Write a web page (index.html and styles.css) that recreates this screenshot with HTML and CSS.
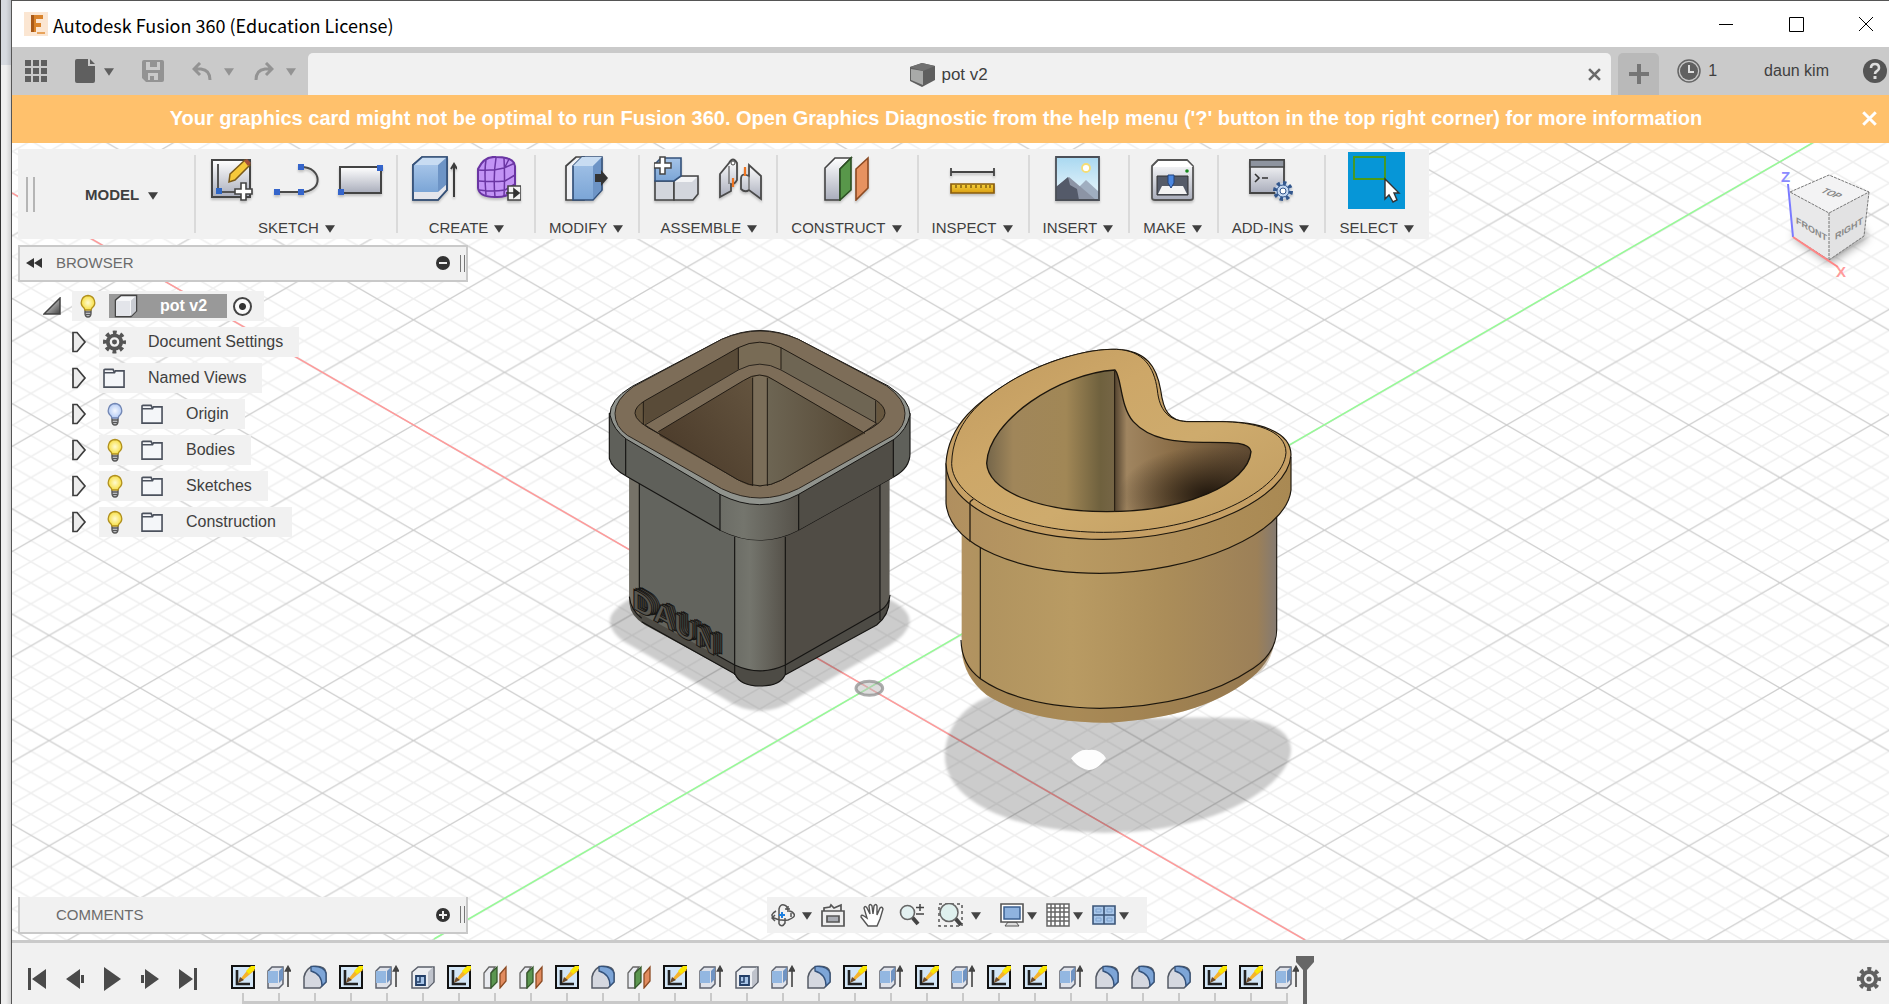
FILE: index.html
```html
<!DOCTYPE html>
<html lang="en">
<head>
<meta charset="utf-8">
<title>Autodesk Fusion 360 (Education License)</title>
<link rel="stylesheet" href="styles.css">
</head>
<body>
<svg class="defs" width="0" height="0" aria-hidden="true">
  <defs>
    <linearGradient id="steel" x1="0" y1="0" x2="0" y2="1"><stop offset="0" stop-color="#fff"/><stop offset="1" stop-color="#a9adbb"/></linearGradient>
    <linearGradient id="blue" x1="0" y1="0" x2="0" y2="1"><stop offset="0" stop-color="#a5c4e8"/><stop offset="1" stop-color="#7ba5d6"/></linearGradient>
    <linearGradient id="sky" x1="0" y1="0" x2="0" y2="1"><stop offset="0" stop-color="#a9d8f0"/><stop offset="1" stop-color="#eef8fd"/></linearGradient>
    <linearGradient id="gold" x1="0" y1="0" x2="0" y2="1"><stop offset="0" stop-color="#f8d33c"/><stop offset="1" stop-color="#d99e14"/></linearGradient>
    <radialGradient id="lit"><stop offset="0" stop-color="#fffbd0"/><stop offset="1" stop-color="#f7df45"/></radialGradient>
    <radialGradient id="unlit"><stop offset="0" stop-color="#f4f8ff"/><stop offset="1" stop-color="#b7cdf5"/></radialGradient>
    <linearGradient id="tri" x1="0" y1="0" x2="1" y2="1"><stop offset="0" stop-color="#fff"/><stop offset="1" stop-color="#444"/></linearGradient>

    <symbol id="caret" viewBox="0 0 12 10"><path d="M0 1h12L6 10z" fill="currentColor"/></symbol>
    <symbol id="cross" viewBox="0 0 12 12"><path d="M1 1l10 10M11 1L1 11" stroke="currentColor" stroke-width="2.4" fill="none"/></symbol>
    <symbol id="gear" viewBox="0 0 24 24">
      <circle cx="12" cy="12" r="10" fill="none" stroke="currentColor" stroke-width="4" stroke-dasharray="4 3.85" stroke-dashoffset="2"/>
      <circle cx="12" cy="12" r="7" fill="none" stroke="currentColor" stroke-width="4"/>
      <circle cx="12" cy="12" r="2.6" fill="currentColor"/>
    </symbol>
    <symbol id="bulb-parts" viewBox="0 0 18 24">
      <path d="M6 14h6v5q0 4-3 4t-3-4z" fill="#dcdfe4" stroke="#555" stroke-width="1.4"/><path d="M6 18h6M6.500 20.500h5" stroke="#555" stroke-width="1.300"/>
    </symbol>
    <symbol id="bulb-on" viewBox="0 0 18 24"><use href="#bulb-parts"/><path d="M9 1.500a7 7 0 0 1 4 12.500l-1 2H6l-1-2A7 7 0 0 1 9 1.500z" fill="url(#lit)" stroke="#b1901d" stroke-width="1.300"/></symbol>
    <symbol id="bulb-off" viewBox="0 0 18 24"><use href="#bulb-parts"/><path d="M9 1.500a7 7 0 0 1 4 12.500l-1 2H6l-1-2A7 7 0 0 1 9 1.500z" fill="url(#unlit)" stroke="#7186b4" stroke-width="1.300"/></symbol>
    <symbol id="folder" viewBox="0 0 24 22"><path d="M1 5V2.500Q1 1.500 2 1.500h8.500L12 5M1 5h11L13 3h9v17H1z" fill="#f4f6f9" stroke="#4b515d" stroke-width="1.700"/></symbol>
    <symbol id="expand" viewBox="0 0 16 22"><path d="M2 1.500h4L14 11 6 20.500H2z" fill="#ececec" stroke="#3d3d3d" stroke-width="1.700"/></symbol>
    <symbol id="component" viewBox="0 0 24 24"><path d="M1.500 6L7 1.500h15.500V17L17 22.500H1.500z" fill="#f6f7f9" stroke="#444" stroke-width="1.500"/><path d="M17 22V6.500L22 2v15z" fill="#c9ccd2"/><path d="M2 7h14v15H2z" fill="#e3e5ea"/></symbol>

    <symbol id="sketch" viewBox="0 0 45 45">
      <path d="M2 4h38v37H2z" fill="url(#steel)" stroke="#444" stroke-width="2"/><path d="M8 8v29M12 36h22" stroke="#555" stroke-width="2"/>
      <path d="M6 32h6v6H6z" fill="#2f66c4"/><path d="M20 18L35 4l5 5-15 15-6 2z" fill="#f6c93a" stroke="#7a5a1b" stroke-width="1.500"/><path d="M34 5l3-2 4 4-3 3z" fill="#a4513a"/>
      <path d="M31 27h5v6h6v5h-6v6h-5v-6h-6v-5h6z" fill="#fff" stroke="#444" stroke-width="1.600"/>
    </symbol>
    <symbol id="arc" viewBox="0 0 45 45"><path d="M3 36h25M27 11c22 0 22 25 1 25" fill="none" stroke="#4a4a4a" stroke-width="2"/><path d="M0 33h6v6H0zM24 33h6v6h-6zM24 8h6v6h-6z" fill="#3565cb"/></symbol>
    <symbol id="rect" viewBox="0 0 45 45"><path d="M2 11h41v26H2z" fill="url(#steel)" stroke="#444" stroke-width="2"/><path d="M0 33h6v6H0zM39 9h6v6h-6z" fill="#3565cb"/></symbol>
    <symbol id="extrude" viewBox="0 0 45 45">
      <path d="M1 36V9l9-8h25v33l-9 10H1z" fill="#e5e6ec" stroke="#4a5567" stroke-width="1.700"/><path d="M1 36V9h25v27z" fill="url(#blue)"/><path d="M1 9l9-8h25l-9 8z" fill="#c8dcf2"/><path d="M26 9l9-8v27l-9 8z" fill="#6d94c6"/>
      <path d="M1 36V9l9-8h25v33l-9 10H1z" fill="none" stroke="#34527b" stroke-width="1.700"/><path d="M42 41V10M39 13l3-5 3 5" stroke="#3c3c3c" stroke-width="2" fill="none"/>
    </symbol>
    <symbol id="form" viewBox="0 0 45 45">
      <path d="M2 13Q8 0 20 1q18 0 19 9v24q-9 8-20 7Q3 41 2 32z" fill="#c293f5" stroke="#6a35a3" stroke-width="2"/>
      <path d="M2 14q15 1 26-2M3 25q14 1 26 0l10-6M3 34q14 2 26 0l10-6M28 12l11-5M10 4Q8 15 10 39M20 2q-3 18-1 39M28 2q1 20 0 38M33 3l-5 10" fill="none" stroke="#6a35a3" stroke-width="1.500"/>
      <path d="M32 30h13v14H32z" fill="#f4f4f4" stroke="#444" stroke-width="1.600"/><path d="M30 37h8M38 33l5 4-5 4z" stroke="#333" stroke-width="1.600" fill="#333"/>
    </symbol>
    <symbol id="presspull" viewBox="0 0 45 45">
      <path d="M2 44V10l10-9h8v43z" fill="#f1f2f5" stroke="#444" stroke-width="1.700"/><path d="M9 44V10l9-9h20v33l-9 10z" fill="url(#blue)" stroke="#34527b" stroke-width="1.700"/><path d="M9 10l9-9h20l-9 9z" fill="#c8dcf2"/><path d="M29 10l8-8v32l-8 9z" fill="#6d94c6"/>
      <path d="M31 18h6v-4l7 8-7 8v-4h-6z" fill="#333"/>
    </symbol>
    <symbol id="newcomp" viewBox="0 0 45 45">
      <path d="M1 25h19v19H1z" fill="#d3d6dd" stroke="#444" stroke-width="1.600"/><path d="M20 25l6-5h18v18l-5 6H20z" fill="#d3d6dd" stroke="#444" stroke-width="1.600"/><path d="M21 26l5-5h17l-5 5z" fill="#f3f4f6"/>
      <path d="M1 25V8l6-6h20v18l-7 5z" fill="url(#blue)" stroke="#34527b" stroke-width="1.600"/><path d="M6 1h5v6h6v5h-6v6H6v-6H0V7h6z" fill="#fff" stroke="#444" stroke-width="1.500"/>
    </symbol>
    <symbol id="joint" viewBox="0 0 45 45">
      <path d="M2 18l9-11q4-7 8 0v17q-3 5-6 4v7l-11 6z" fill="url(#steel)" stroke="#4a4a4a" stroke-width="1.800"/><circle cx="15" cy="7" r="2" fill="#fff" stroke="#444"/><path d="M11 10v18" stroke="#666" stroke-width="1.300"/>
      <path d="M43 20L31 9v11q-8-4-8 3v10q4 4 8 1l12 9z" fill="url(#steel)" stroke="#4a4a4a" stroke-width="1.800"/><path d="M31 20v14" stroke="#666" stroke-width="1.300"/><path d="M15 22v9M27 11v9" stroke="#ee7421" stroke-width="2.200"/>
    </symbol>
    <symbol id="plane" viewBox="0 0 45 45">
      <path d="M1 44V12L11 2h16L16 13v31z" fill="url(#steel)" stroke="#444" stroke-width="1.600"/><path d="M16 44V13L27 2v32z" fill="#58974a" stroke="#2b4f22" stroke-width="1.600"/><path d="M32 44V13L44 2v30z" fill="#e79260" stroke="#8c4a22" stroke-width="1.600"/>
    </symbol>
    <symbol id="measure" viewBox="0 0 45 45"><path d="M1 12v8M44 12v8M1 16h43" stroke="#444" stroke-width="1.800"/><path d="M1 28h43v9H1z" fill="url(#gold)" stroke="#8a5d0e" stroke-width="1.700"/><path d="M6 29v3M11 29v3M16 29v3M21 29v3M26 29v3M31 29v3M36 29v3M40 29v3" stroke="#6d4a0d" stroke-width="1.200"/></symbol>
    <symbol id="image" viewBox="0 0 45 45"><path d="M1 1h43v43H1z" fill="url(#sky)"/><circle cx="31" cy="12" r="4" fill="#fff" stroke="#f6dd74" stroke-width="1.800"/><path d="M20 35l11-11 13 12v8H20z" fill="#a0aec0"/><path d="M1 31l13-10 27 23H1z" fill="#8c94a5"/><path d="M1 31l12-10 2 8 7 4 2 11H1z" fill="#545a69"/><path d="M1 1h43v43H1z" fill="none" stroke="#4b4f57" stroke-width="1.800"/></symbol>
    <symbol id="printer" viewBox="0 0 45 45"><path d="M2 10l6-6h29l6 6v32q0 2-3 2H5q-3 0-3-2z" fill="url(#steel)" stroke="#555" stroke-width="1.800"/><path d="M3 11l6-6h28l6 6z" fill="#fff"/><path d="M7 20h31v19H7z" fill="#555b68" stroke="#333"/><path d="M12 30h21l4 8H8z" fill="#f3f3f3"/><path d="M18 19h6v8l-3 5-3-5z" fill="#4b87e0" stroke="#23427c"/><circle cx="37" cy="15" r="1.800" fill="#168a1c"/></symbol>
    <symbol id="script" viewBox="0 0 45 45"><path d="M2 4h34v33H2z" fill="url(#steel)" stroke="#444" stroke-width="1.800"/><path d="M2 4h34v7H2z" fill="#8e949f" stroke="#444" stroke-width="1.500"/><path d="M7 18l4 4-4 4M14 22h6" fill="none" stroke="#333" stroke-width="1.600"/><circle cx="35" cy="35" r="8" fill="#c5d8f1" stroke="#33578d" stroke-width="4" stroke-dasharray="3.200 3.050"/><circle cx="35" cy="35" r="6" fill="#c5d8f1" stroke="#33578d"/><circle cx="35" cy="35" r="3" fill="#fff" stroke="#33578d"/></symbol>
    <symbol id="select" viewBox="0 0 57 57"><path d="M6 5h31v22H6z" fill="none" stroke="#4d9a16" stroke-width="1.800"/><path d="M37 27v20l4-4 4 7 4-2-3-7h5z" fill="#fff" stroke="#333" stroke-width="1.400"/></symbol>

    <symbol id="t-sketch" viewBox="0 0 24 24"><path d="M1 1h22v22H1z" fill="#d3e6f6" stroke="#111" stroke-width="2"/><path d="M6 5v14h13" fill="none" stroke="#222" stroke-width="2.600"/><path d="M7 17L19 2l5 3L12 15z" fill="#f5b32c"/><path d="M15 6l5-5h4v3l-6 5z" fill="#fbe800"/><path d="M7 18l2-6 4 3z" fill="#6b4b2d"/></symbol>
    <symbol id="t-extrude" viewBox="0 0 24 24"><path d="M1 23V6l4-4h11v17l-4 4z" fill="#dfe2ea" stroke="#5d626d" stroke-width="1.500"/><path d="M1 18V6h10v12z" fill="#93b7e1"/><path d="M12 18V6l4-4v12z" fill="#6f93c2"/><path d="M21 22V3M18.500 6L21 1.500 23.500 6z" stroke="#444" stroke-width="1.600" fill="#444"/></symbol>
    <symbol id="t-fillet" viewBox="0 0 24 24"><path d="M1 23V12Q3 3 10 1.500q12-1 13 6V17l-6 6z" fill="#d5d8e0" stroke="#555b66" stroke-width="1.500"/><path d="M8 1.500q13-1 15 7V17l-4 4q0-12-11-15z" fill="#7da5d7" stroke="#34527b" stroke-width="1.300"/></symbol>
    <symbol id="t-shell" viewBox="0 0 24 24"><path d="M1 23V7l6-5h16v15l-6 6z" fill="#eceef2" stroke="#5a5f6a" stroke-width="1.500"/><path d="M17 22V7l5-5v15z" fill="#bfc3cc"/><path d="M5 11h9v9H5z" fill="#a8c5e8" stroke="#233f68" stroke-width="1.800"/><path d="M9 12v5H6" stroke="#233f68" stroke-width="1.500" fill="none"/></symbol>
    <symbol id="t-plane" viewBox="0 0 24 24"><path d="M1 23V8l5-6h6L8 8v15z" fill="#e9ebf0" stroke="#666" stroke-width="1.300"/><path d="M8 23V8l6-6v15z" fill="#5b9650" stroke="#355a2c" stroke-width="1.300"/><path d="M17 23V9l6-7v14z" fill="#e18b5e" stroke="#8c4a22" stroke-width="1.300"/></symbol>
  </defs>
</svg>

<div class="desktop"></div>
<main class="app">
  <header class="titlebar">
    <svg class="logo" viewBox="0 0 24 24"><path d="M0 0h24v24H0z" fill="#fbe6d2"/><path d="M7 3h12v4h-7v4h5v4h-5v5H7z" fill="#d9832b"/><path d="M7 3h3v17H7z" fill="#a95a18"/><path d="M13 20h8v2h-8z" fill="#e8a45c"/></svg>
    <h1>Autodesk Fusion 360 (Education License)</h1>
    <div class="win">
      <button aria-label="Minimize"><svg width="16" height="16"><path d="M1 8.500h14" stroke="#000"/></svg></button>
      <button aria-label="Maximize"><svg width="16" height="16"><path d="M1.500 1.500h14v14h-14z" fill="none" stroke="#000"/></svg></button>
      <button aria-label="Close"><svg width="16" height="16"><path d="M1 1l14 14M15 1L1 15" stroke="#000"/></svg></button>
    </div>
  </header>

  <nav class="tabbar">
    <div class="quick">
      <button class="grid-b" aria-label="Data panel"><svg width="22" height="22" fill="#5f5f5f"><path d="M0 0h6v6H0zM8 0h6v6H8zM16 0h6v6h-6zM0 8h6v6H0zM8 8h6v6H8zM16 8h6v6h-6zM0 16h6v6H0zM8 16h6v6H8zM16 16h6v6h-6z"/></svg></button>
      <button class="file-b" aria-label="File"><svg width="20" height="24" fill="#5f5f5f"><path d="M2 0h11v7h7v15q0 2-2 2H2q-2 0-2-2V2q0-2 2-2zM15 0l5 5h-5z"/></svg><svg class="car"><use href="#caret"/></svg></button>
      <button class="save-b" aria-label="Save"><svg width="22" height="22" fill="#939393"><path fill-rule="evenodd" d="M2 0h18q2 0 2 2v18q0 2-2 2H4l-4-4V2q0-2 2-2zM4 2v8h14V2h-3v5H8V2zM6 13v7h2v-4h4v4h4v-7z"/></svg></button>
      <button class="undo-b off" aria-label="Undo"><svg width="20" height="18"><path d="M8 1L2 7l6 6M2 7h7q9 1 9 11" fill="none" stroke="currentColor" stroke-width="3"/></svg><svg class="car"><use href="#caret"/></svg></button>
      <button class="redo-b off" aria-label="Redo"><svg width="20" height="18"><path d="M12 1l6 6-6 6M18 7h-7Q2 8 2 18" fill="none" stroke="currentColor" stroke-width="3"/></svg><svg class="car"><use href="#caret"/></svg></button>
    </div>
    <div class="tab">
      <svg width="25" height="24"><path d="M0 4l12-4 13 3v14l-13 7L0 18z" fill="#5f5f5f"/><path d="M1 6l12 2v14L1 17z" fill="#a9aaa9"/><path d="M0 4l12-4 13 3-12 5z" fill="#707070"/></svg>
      <span>pot v2</span>
      <button class="tab-x" aria-label="Close tab"><svg width="13" height="13" viewBox="0 0 12 12"><use href="#cross"/></svg></button>
    </div>
    <button class="plus" aria-label="New tab"><svg width="20" height="20"><path d="M10 0v20M0 10h20" stroke="#757575" stroke-width="4"/></svg></button>
    <button class="jobs"><svg width="24" height="24"><circle cx="12" cy="12" r="11" fill="none" stroke="#666" stroke-width="1.500"/><circle cx="12" cy="12" r="9" fill="#606060"/><path d="M12 6v7h5" fill="none" stroke="#ddd" stroke-width="2"/></svg>1</button>
    <button class="user">daun kim</button>
    <button class="help" aria-label="Help"><svg width="24" height="24"><circle cx="12" cy="12" r="12" fill="#555"/><path d="M8 9q0-4 4-4t4 4q0 2-2 3t-2 3" fill="none" stroke="#ddd" stroke-width="2.600"/><path d="M10.500 17h3v3h-3z" fill="#ddd"/></svg></button>
  </nav>

  <div class="banner" role="alert">
    <p>Your graphics card might not be optimal to run Fusion 360. Open Graphics Diagnostic from the help menu ('?' button in the top right corner) for more information</p>
    <button aria-label="Dismiss"><svg width="15" height="15" viewBox="0 0 12 12"><use href="#cross"/></svg></button>
  </div>

  <section class="workspace">
    <svg class="canvas" viewBox="12 143 1877 797" preserveAspectRatio="xMidYMid slice" aria-label="Model view">
      <defs>
        <pattern id="grid" patternUnits="userSpaceOnUse" x="869" y="688" width="182.200" height="105.200">
          <path d="M-145.760 0L36.440 105.200M-109.320 0L72.880 105.200M-72.880 0L109.320 105.200M-36.440 0L145.760 105.200M36.440 0L218.640 105.200M72.880 0L255.080 105.200M109.320 0L291.520 105.200M145.760 0L327.960 105.200M36.440 0L-145.760 105.200M72.880 0L-109.320 105.200M109.320 0L-72.880 105.200M145.760 0L-36.440 105.200M218.640 0L36.440 105.200M255.080 0L72.880 105.200M291.520 0L109.320 105.200M327.960 0L145.760 105.200" stroke="#efefef" stroke-width="1.500"/>
          <path d="M0 0L182.200 105.200M182.200 0L0 105.200" stroke="#cfcfcf" stroke-width="1.300"/>
        </pattern>
        <linearGradient id="cornerG"><stop offset="0" stop-color="#6c6d66"/><stop offset=".3" stop-color="#74756d"/><stop offset="1" stop-color="#56524a"/></linearGradient>
        <linearGradient id="wood"><stop offset="0" stop-color="#b39362"/><stop offset=".06" stop-color="#b0935f"/><stop offset=".35" stop-color="#b99b63"/><stop offset=".65" stop-color="#ab8d59"/><stop offset=".94" stop-color="#9c8058"/><stop offset="1" stop-color="#857a70"/></linearGradient>
        <linearGradient id="woodBand"><stop offset="0" stop-color="#b08f5f"/><stop offset=".35" stop-color="#b99a62"/><stop offset=".65" stop-color="#b0905b"/><stop offset="1" stop-color="#a98953"/></linearGradient>
        <linearGradient id="woodTop" x1="0" y1="0" x2="1" y2="1"><stop offset="0" stop-color="#c09a5f"/><stop offset=".35" stop-color="#cda768"/><stop offset=".6" stop-color="#ceab6d"/><stop offset="1" stop-color="#bf9b60"/></linearGradient>
        <linearGradient id="wellG"><stop offset="0" stop-color="#75664a"/><stop offset=".1" stop-color="#a0865a"/><stop offset=".3" stop-color="#a18756"/><stop offset=".43" stop-color="#6f613e"/><stop offset=".48" stop-color="#756545"/><stop offset=".49" stop-color="#5d4c36"/><stop offset=".53" stop-color="#a08560"/><stop offset=".7" stop-color="#8b6e48"/><stop offset="1" stop-color="#5d4831"/></linearGradient>
        <radialGradient id="wellDark" cx=".84" cy=".88" r=".34"><stop offset="0" stop-color="#1d140b" stop-opacity=".95"/><stop offset="1" stop-color="#1d140b" stop-opacity="0"/></radialGradient>
        <linearGradient id="innerL" x1="0" y1="1" x2="1" y2="0"><stop offset="0" stop-color="#463626"/><stop offset="1" stop-color="#64543f"/></linearGradient>
        <linearGradient id="innerR"><stop offset="0" stop-color="#6d6553"/><stop offset="1" stop-color="#544633"/></linearGradient>
        <filter id="soft"><feGaussianBlur stdDeviation="4"/></filter>
      </defs>
      <path d="M12 143h1877v797H12z" fill="url(#grid)"/>
      <g fill="none" stroke-width="1.500">
        <path d="M12 193L1305 940" stroke="#ff9a9a"/><path d="M434 939L1814 142" stroke="#96fb96"/>
      </g>

      <g transform="translate(590 310) scale(.33333)" stroke-linejoin="round">
        <path d="M60 930Q60 900 130 860H880Q965 895 958 940Q950 975 900 1005L620 1165Q510 1240 400 1165L110 1000Q60 970 60 930z" fill="#000" fill-opacity=".2" filter="url(#soft)"/>
        <ellipse cx="838" cy="1135" rx="40" ry="21" fill="#bbb" fill-opacity=".5" stroke="#8a8a8a" stroke-opacity=".7" stroke-width="9"/>
        <path d="M118 470V880Q122 920 165 945L435 1092Q450 1128 510 1128Q570 1128 585 1095L860 945Q898 915 898 870V470z" fill="#4d4b45"/>
        <path d="M118 470h30v450q-25-20-30-50z" fill="#767268"/>
        <path d="M148 500L434 650V1065L148 910z" fill="#63645e"/>
        <path d="M434 650H586V1065Q510 1100 434 1065z" fill="url(#cornerG)"/>
        <path d="M586 650L870 500V903L586 1065z" fill="#504c45"/>
        <path d="M870 490h28v370q-5 25-28 43z" fill="#5f5c55"/>
        <path d="M148 500V900M434 680V1095M586 680V1095M870 500V930M118 860Q122 900 155 925M380 1035L434 1065Q510 1100 586 1065L870 903Q898 885 900 855M155 935L435 1092Q450 1128 510 1128Q570 1128 585 1095L860 945Q898 915 898 870" fill="none" stroke="#161513" stroke-width="3.500"/>
        <path d="M58 310V445Q65 475 112 500L390 660Q510 720 626 660L912 500Q960 475 960 430V310z" fill="#5f605a" stroke="#161513" stroke-width="3.500"/>
        <path d="M390 540V660Q510 720 626 660V540z" fill="url(#cornerG)"/><path d="M626 545V660L912 500V380z" fill="#504d46"/>
        <path d="M107 380V495M390 545V662M626 545V660M910 380V500" stroke="#161513" stroke-width="3.500"/>
        <path d="M60 315Q58 270 125 230L395 88Q510 35 625 88L895 228Q960 270 960 315Q950 360 912 388L626 553Q510 615 390 553L110 388Q70 360 60 315z" fill="#90938d" stroke="#161513" stroke-width="3"/>
        <path d="M75 310Q75 270 130 230L395 88Q510 38 625 88L890 228Q945 268 945 310Q945 350 910 376L625 536Q510 592 395 536L112 376Q75 350 75 310z" fill="#7d6d58" stroke="#2b251e" stroke-width="3"/>
        <path d="M135 310Q135 290 165 272L445 113Q510 80 573 113L860 272Q885 290 885 310Q885 335 820 368L575 510Q510 545 445 510L205 370Q135 335 135 310z" fill="#67573f"/>
        <path d="M445 113Q510 80 573 113V180Q510 145 445 180z" fill="#786b55"/><path d="M573 113L860 272V340L573 180z" fill="#6e6553"/><path d="M160 275L445 113V180L165 342z" fill="#594b38"/>
        <path d="M165 345L445 180Q510 145 573 180L860 340L820 368L575 510Q510 545 445 510L205 370z" fill="#7d6d58" stroke="#2b251e" stroke-width="3"/>
        <path d="M205 365L460 212Q510 178 555 212L825 370L575 510Q510 545 445 510L210 378z" fill="#67573f"/>
        <path d="M205 365L460 212L488 203V528Q460 522 445 510L210 378z" fill="url(#innerL)"/>
        <path d="M488 203Q510 190 532 203V528H488z" fill="#7b6e59"/>
        <path d="M532 203L555 212L825 370L575 510L532 528z" fill="url(#innerR)"/>
        <path d="M205 365L460 212Q510 178 555 212L825 370M488 203V528M532 203V528M445 113V178M573 113V178M160 275V345M857 272V340M135 310Q135 290 165 272L445 113Q510 80 573 113L860 272Q885 290 885 310Q885 335 820 368L575 510Q510 545 445 510L205 370Q135 335 135 310z" fill="none" stroke="#211b14" stroke-width="3"/>
      </g>
      <g class="emboss" transform="translate(632 608) skewY(30)">
        <text x="8" y="-6">DAUN</text><text x="6" y="-5">DAUN</text><text x="4" y="-3">DAUN</text><text x="2" y="-2">DAUN</text><text class="face" x="0" y="0">DAUN</text>
      </g>

      <g transform="translate(920 330) scale(.33333)" stroke-linejoin="round">
        <path d="M75 1280C75 1180 150 1110 240 1090L700 1165Q830 1160 960 1165C1080 1175 1113 1220 1113 1260C1110 1360 900 1510 550 1508C250 1505 75 1400 75 1280z" fill="#000" fill-opacity=".2" filter="url(#soft)"/>
        <path d="M453 1285Q480 1255 505 1260Q540 1255 558 1285Q530 1322 505 1320Q475 1315 453 1285z" fill="#fdfdfd"/>
        <path d="M125 560V960Q130 1040 200 1095Q330 1178 560 1178Q860 1165 1010 1030Q1068 970 1068 900V560z" fill="url(#wood)"/>
        <path d="M130 975Q200 1130 540 1135Q900 1130 1060 955Q1040 1020 1010 1030Q860 1165 560 1178Q330 1178 200 1095Q135 1040 130 975z" fill="#8c6e43" fill-opacity=".35"/>
        <path d="M123 930Q125 1005 181 1046Q300 1130 540 1135Q830 1130 1000 1015Q1068 970 1070 900V560M181 650V1046" fill="none" stroke="#1c160d" stroke-width="3.500"/>
        <path d="M78 400V520C90 650 300 730 540 730C820 730 1100 610 1113 480V380z" fill="url(#woodBand)"/>
        <path d="M78 400V520C90 650 300 730 540 730C820 730 1100 610 1113 480V380" fill="none" stroke="#1c160d" stroke-width="3.500"/>
        <path d="M78 400C85 280 180 210 270 155C370 95 500 55 590 58C680 62 710 110 722 180C730 240 745 272 800 275H900C1010 275 1113 300 1113 375C1105 500 850 628 550 628C290 628 78 530 78 400z" fill="#c6a065" stroke="#1c160d" stroke-width="3.500"/>
        <path d="M95 400C98 280 180 210 270 155C370 95 500 55 590 58C670 62 702 110 712 180C718 240 745 272 800 275H900C1000 275 1098 300 1098 368C1090 480 850 607 550 607C300 607 95 510 95 400z" fill="url(#woodTop)" stroke="#1c160d" stroke-width="3"/>
        <path d="M200 400C205 270 420 130 585 120C605 140 600 230 640 275C690 330 770 337 850 337C930 337 990 335 993 365C985 460 800 545 560 545C350 545 205 480 200 400z" fill="url(#wellG)"/>
        <path d="M200 400C205 270 420 130 585 120C605 140 600 230 640 275C690 330 770 337 850 337C930 337 990 335 993 365C985 460 800 545 560 545C350 545 205 480 200 400z" fill="url(#wellDark)" stroke="#1c160d" stroke-width="4"/>
        <path d="M584 120V545M150 515V635M150 515l10-8" stroke="#2a2013" stroke-width="4"/>
      </g>
    </svg>

    <svg class="viewcube" width="105" height="120" viewBox="1784 165 105 120" aria-label="View cube">
      <defs><filter id="cs"><feGaussianBlur stdDeviation="4"/></filter></defs>
      <path d="M1793 238L1830 264L1868 238L1860 225H1800z" fill="#000" fill-opacity=".35" filter="url(#cs)"/>
      <path d="M1790 192L1829 213V260L1793 237z" fill="#e9e9ea"/><path d="M1829 213L1869 192L1864 236L1829 260z" fill="#e2e2e3"/><path d="M1790 192L1829 175L1869 192L1829 213z" fill="#f3f3f4"/>
      <path d="M1790 192L1829 175L1869 192L1829 213zM1829 213V260L1793 237M1829 260L1864 236L1869 192" fill="none" stroke="#777" stroke-dasharray="3 1"/>
      <path d="M1788 184L1793 237" stroke="#7a7aff" stroke-width="2"/><path d="M1793 237L1838 267" stroke="#ff8585" stroke-width="2"/>
      <g class="cubetext">
        <text transform="translate(1796 223) skewY(31)">FRONT</text><text transform="translate(1835 240) skewY(-31)">RIGHT</text><text transform="translate(1820 192) rotate(22) skewX(-35)">TOP</text>
      </g>
      <text class="axis z" x="1781" y="182">Z</text><text class="axis x" x="1836" y="277">X</text>
    </svg>

    <div class="overlay">
      <div class="toolbar">
        <div class="mode"><i class="grip"></i><button class="tb bold">MODEL<svg class="car"><use href="#caret"/></svg></button></div>
        <div class="group wide"><div class="icons"><svg><use href="#sketch"/></svg><svg><use href="#arc"/></svg><svg><use href="#rect"/></svg></div><button class="tb">SKETCH<svg class="car"><use href="#caret"/></svg></button></div>
        <div class="group wide"><div class="icons"><svg><use href="#extrude"/></svg><svg><use href="#form"/></svg></div><button class="tb">CREATE<svg class="car"><use href="#caret"/></svg></button></div>
        <div class="group"><div class="icons"><svg><use href="#presspull"/></svg></div><button class="tb">MODIFY<svg class="car"><use href="#caret"/></svg></button></div>
        <div class="group wide"><div class="icons"><svg><use href="#newcomp"/></svg><svg><use href="#joint"/></svg></div><button class="tb">ASSEMBLE<svg class="car"><use href="#caret"/></svg></button></div>
        <div class="group"><div class="icons"><svg><use href="#plane"/></svg></div><button class="tb">CONSTRUCT<svg class="car"><use href="#caret"/></svg></button></div>
        <div class="group"><div class="icons"><svg><use href="#measure"/></svg></div><button class="tb">INSPECT<svg class="car"><use href="#caret"/></svg></button></div>
        <div class="group"><div class="icons"><svg><use href="#image"/></svg></div><button class="tb">INSERT<svg class="car"><use href="#caret"/></svg></button></div>
        <div class="group"><div class="icons"><svg><use href="#printer"/></svg></div><button class="tb">MAKE<svg class="car"><use href="#caret"/></svg></button></div>
        <div class="group"><div class="icons"><svg><use href="#script"/></svg></div><button class="tb">ADD-INS<svg class="car"><use href="#caret"/></svg></button></div>
        <div class="group"><div class="icons"><svg class="sel"><use href="#select"/></svg></div><button class="tb">SELECT<svg class="car"><use href="#caret"/></svg></button></div>
      </div>

      <div class="panel browser">
        <button class="fold" aria-label="Collapse"><svg width="16" height="10"><path d="M8 0v10L0 5zM16 0v10L8 5z" fill="#333"/></svg></button>
        <h2>BROWSER</h2>
        <button aria-label="Hide"><svg width="14" height="14"><circle cx="7" cy="7" r="7" fill="#333"/><path d="M3 7h8" stroke="#eee" stroke-width="2"/></svg></button><i class="grip"></i>
      </div>
      <ul class="tree">
        <li class="root"><svg class="open" width="18" height="18"><path d="M1 17L17 1v16z" fill="url(#tri)" stroke="#444" stroke-width="1.500"/></svg>
          <div class="node"><svg class="bulb"><use href="#bulb-on"/></svg><span class="picked"><svg width="24" height="24"><use href="#component"/></svg>pot v2</span><input type="radio" checked aria-label="Activate component"></div></li>
        <li><svg class="exp"><use href="#expand"/></svg><div class="node"><svg class="ic gear"><use href="#gear"/></svg>Document Settings</div></li>
        <li><svg class="exp"><use href="#expand"/></svg><div class="node"><svg class="ic"><use href="#folder"/></svg>Named Views</div></li>
        <li><svg class="exp"><use href="#expand"/></svg><div class="node"><svg class="bulb"><use href="#bulb-off"/></svg><svg class="ic"><use href="#folder"/></svg>Origin</div></li>
        <li><svg class="exp"><use href="#expand"/></svg><div class="node"><svg class="bulb"><use href="#bulb-on"/></svg><svg class="ic"><use href="#folder"/></svg>Bodies</div></li>
        <li><svg class="exp"><use href="#expand"/></svg><div class="node"><svg class="bulb"><use href="#bulb-on"/></svg><svg class="ic"><use href="#folder"/></svg>Sketches</div></li>
        <li><svg class="exp"><use href="#expand"/></svg><div class="node"><svg class="bulb"><use href="#bulb-on"/></svg><svg class="ic"><use href="#folder"/></svg>Construction</div></li>
      </ul>

      <div class="bottom">
        <div class="panel comments"><h2>COMMENTS</h2><button aria-label="Show"><svg width="14" height="14"><circle cx="7" cy="7" r="7" fill="#333"/><path d="M3 7h8M7 3v8" stroke="#eee" stroke-width="2"/></svg></button><i class="grip"></i></div>
        <div class="navbar">
          <button aria-label="Orbit"><svg width="24" height="24" fill="none" stroke="#555" stroke-width="1.500"><path d="M8 21V6q1-5 5-4t3 5M8 21q3 4 6-1v-5M5 8q-7 4-2 7 6 3 14 2 8-3 6-6t-5-3M4 12l-3 3 3 3"/><path d="M11 9v6M8 12h6" stroke="#1c7fe0" stroke-width="2"/><path d="M14 6h5M17 3v6M20 10v4"/></svg><svg class="car"><use href="#caret"/></svg></button>
          <button class="look" aria-label="Look at"><svg width="24" height="24" fill="#eee" stroke="#555" stroke-width="1.700"><path d="M3 8V5l6-1 1-2 3 3 7-3v6M1 8h22v15H1z"/><path d="M6 13h12v6H6z" fill="#a9acb3"/></svg></button>
          <button class="pan" aria-label="Pan"><svg width="24" height="24" fill="#fff" stroke="#555" stroke-width="1.400"><path d="M8 23L1 14q0-3 3-1l3 2L4 5q1-3 3 0l3 6-1-8q1-3 3 0l1 8 1-8q2-3 3 0v9l3-7q2-2 3 1l-3 10-3 7z"/></svg></button>
          <button class="zm" aria-label="Zoom"><svg width="26" height="24"><path d="M13 14l6 7" stroke="#444" stroke-width="4"/><circle cx="8.500" cy="9.500" r="7" fill="#e3f1f1" stroke="#666" stroke-width="1.600"/><path d="M17 4.500h8M21 1v7M17 11h8" stroke="#444" stroke-width="1.500"/></svg></button>
          <button class="fit" aria-label="Fit"><svg width="26" height="24"><path d="M1 1h23v22H1z" fill="none" stroke="#555" stroke-width="1.500" stroke-dasharray="3 3"/><path d="M17 15l6 7" stroke="#444" stroke-width="4"/><circle cx="11" cy="9.500" r="9" fill="#dff0ee" stroke="#666" stroke-width="1.500"/></svg><svg class="car"><use href="#caret"/></svg></button>
          <button class="disp" aria-label="Display settings"><svg width="24" height="24"><path d="M8 19h8l3 4H5z" fill="#ddd" stroke="#555"/><path d="M1 1h22v18H1z" fill="#fff" stroke="#555" stroke-width="1.600"/><path d="M4 4h16v12H4z" fill="#8fb3df" stroke="#3b6091" stroke-width="1.500"/></svg><svg class="car"><use href="#caret"/></svg></button>
          <button class="grd" aria-label="Grid and snaps"><svg width="24" height="24" fill="#fff" stroke="#666" stroke-width="1.500"><path d="M1 1h22v22H1zM5 1v22M9 1v22M14 1v22M18 1v22M1 5h22M1 9h22M1 14h22M1 18h22"/></svg><svg class="car"><use href="#caret"/></svg></button>
          <button class="vp" aria-label="Viewports"><svg width="24" height="20" fill="#a9c7ea" stroke="#3b5578" stroke-width="1.600"><path d="M1 1h22v18H1z"/><path d="M12 1v18M1 10h22"/><path d="M4 4h5v3H4zM15 4h5v3h-5zM4 13h5v3H4zM15 13h5v3h-5z" stroke="#7fa3cf" stroke-width="1"/></svg><svg class="car"><use href="#caret"/></svg></button>
        </div>
      </div>
    </div>
  </section>

  <footer class="timeline">
    <div class="play">
      <button aria-label="Go to start"><svg width="20" height="22"><path d="M1 0h3v22H1zM19 1v20L5 11z"/></svg></button>
      <button aria-label="Step back"><svg width="20" height="22"><path d="M15 1v20L1 11zM16 7h3v8h-3z"/></svg></button>
      <button aria-label="Play"><svg width="20" height="24"><path d="M1 0v24l17-12z"/></svg></button>
      <button aria-label="Step forward"><svg width="20" height="22"><path d="M4 1v20L18 11zM0 7h3v8H0z"/></svg></button>
      <button aria-label="Go to end"><svg width="20" height="22"><path d="M15 0h3v22h-3zM0 1v20L14 11z"/></svg></button>
    </div>
    <ol class="steps">
      <li><svg><use href="#t-sketch"/></svg></li><li><svg><use href="#t-extrude"/></svg></li><li><svg><use href="#t-fillet"/></svg></li><li><svg><use href="#t-sketch"/></svg></li><li><svg><use href="#t-extrude"/></svg></li>
      <li><svg><use href="#t-shell"/></svg></li><li><svg><use href="#t-sketch"/></svg></li><li><svg><use href="#t-plane"/></svg></li><li><svg><use href="#t-plane"/></svg></li><li><svg><use href="#t-sketch"/></svg></li>
      <li><svg><use href="#t-fillet"/></svg></li><li><svg><use href="#t-plane"/></svg></li><li><svg><use href="#t-sketch"/></svg></li><li><svg><use href="#t-extrude"/></svg></li><li><svg><use href="#t-shell"/></svg></li>
      <li><svg><use href="#t-extrude"/></svg></li><li><svg><use href="#t-fillet"/></svg></li><li><svg><use href="#t-sketch"/></svg></li><li><svg><use href="#t-extrude"/></svg></li><li><svg><use href="#t-sketch"/></svg></li>
      <li><svg><use href="#t-extrude"/></svg></li><li><svg><use href="#t-sketch"/></svg></li><li><svg><use href="#t-sketch"/></svg></li><li><svg><use href="#t-extrude"/></svg></li><li><svg><use href="#t-fillet"/></svg></li>
      <li><svg><use href="#t-fillet"/></svg></li><li><svg><use href="#t-fillet"/></svg></li><li><svg><use href="#t-sketch"/></svg></li><li><svg><use href="#t-sketch"/></svg></li><li><svg><use href="#t-extrude"/></svg></li>
    </ol>
    <svg class="marker" width="18" height="50"><path d="M0 0h18v6l-7 8v36H7V14L0 6z" fill="#666"/></svg>
    <button class="settings" aria-label="Timeline settings"><svg width="24" height="24"><use href="#gear"/></svg></button>
  </footer>
</main>
</body>
</html>
```

FILE: styles.css
```css
* { box-sizing: border-box; }
body {
  margin: 0;
  display: flex;
  min-height: 100vh;
  font-family: "Liberation Sans", Arial, sans-serif;
  font-size: 16px;
  color: #3f3f3f;
  background: #fff;
}
button {
  display: flex;
  align-items: center;
  margin: 0;
  padding: 0;
  border: 0;
  background: none;
  font: inherit;
  color: inherit;
}
svg { display: block; flex: none; }
h1, h2, p, ul, ol { margin: 0; padding: 0; font-weight: normal; list-style: none; }
.defs { position: absolute; }
.car { width: 10px; height: 9px; }

/* strip of the desktop left of the window */
.desktop {
  flex: none;
  width: 12px;
  border-left: 1px solid #333;
  border-right: 1px solid #555;
  background: linear-gradient(90deg, transparent 50%, rgba(0, 0, 0, .12)), linear-gradient(#d6dae0 65px, #efefef 65px);
}
.app { flex: 1; min-width: 0; display: flex; flex-direction: column; min-height: 100vh; }

.titlebar {
  display: flex;
  align-items: center;
  height: 47px;
  padding: 0 15px 0 12px;
  border-top: 1px solid #555;
}
.logo { width: 24px; height: 24px; }
.titlebar h1 {
  flex: 1;
  margin-left: 5px;
  padding-top: 2px;
  color: #000;
  font-family: "Noto Sans CJK KR", "Noto Sans", sans-serif;
  font-size: 18px;
  line-height: 24px;
}
.win { display: flex; gap: 54px; }

.tabbar { display: flex; align-items: flex-end; height: 48px; background: #cacaca; }
.quick { display: flex; align-items: center; width: 296px; height: 48px; padding-left: 13px; color: #5f5f5f; }
.quick button { gap: 9px; margin-right: 28px; }
.quick .off { gap: 12px; margin-right: 20px; color: #939393; }
.tab {
  flex: 1;
  display: flex;
  align-items: center;
  justify-content: center;
  gap: 6px;
  height: 42px;
  padding: 1px 0 0 8px;
  border-radius: 5px 5px 0 0;
  background: #f1f1f1;
  font-size: 17px;
}
.tab span { margin-right: auto; }
.tab svg:first-child { margin-left: auto; }
.tab-x { margin-right: 10px; color: #6a6a6a; }
.plus { justify-content: center; width: 41px; height: 42px; margin: 0 18px 0 7px; border-radius: 5px 5px 0 0; background: #b9b9b9; }
.jobs, .user, .help { height: 48px; }
.jobs { gap: 7px; margin-right: 47px; }
.user { margin-right: 34px; }
.help { margin-right: 2px; }

.banner { display: flex; align-items: center; height: 48px; padding: 0 12px 2px 0; background: #ffc16c; color: #fff; }
.banner p { flex: 1; padding-right: 2px; text-align: center; font-weight: bold; font-size: 20px; white-space: nowrap; }

.workspace { position: relative; flex: 1; display: flex; min-height: 600px; }
.canvas { position: absolute; inset: 0; width: 100%; height: 100%; }
.viewcube { position: absolute; top: 22px; right: 0; overflow: visible; }
.cubetext { font-size: 9px; font-weight: bold; fill: #888; }
.axis { font-size: 15px; font-weight: bold; }
.axis.z { fill: #8b8bff; }
.axis.x { fill: #ff9a9a; }
.emboss { font-size: 29px; font-weight: bold; fill: #4a4842; stroke: #151412; stroke-width: 1px; }
.emboss .face { fill: #57554e; }

.overlay { position: relative; flex: 1; display: flex; flex-direction: column; align-items: flex-start; padding: 6px; }
.toolbar { display: flex; height: 90px; background: #f1f1f1; }
.grip { display: block; border: solid #b5b5b5; border-width: 0 2px; }
.mode { display: flex; align-items: center; width: 176px; gap: 50px; padding-left: 8px; }
.mode .grip { width: 9px; height: 35px; }
.tb { gap: 6px; font-size: 15px; line-height: 20px; }
.tb.bold { gap: 9px; padding-top: 2px; font-weight: bold; }
.group { position: relative; display: flex; flex-direction: column; align-items: center; justify-content: space-between; padding: 3px 15px 0; }
.group.wide { padding: 3px 13px 0 16px; }
.group::before { content: ""; position: absolute; left: 0; top: 6px; bottom: 6px; border-left: 2px solid #dadada; }
.icons { display: flex; align-items: flex-start; gap: 19px; height: 57px; }
.icons svg { width: 45px; height: 45px; margin-top: 4px; filter: drop-shadow(0 2px 1px rgba(0, 0, 0, .2)); }
.icons .sel { width: 57px; height: 57px; margin-top: 0; background: #0696d7; filter: none; }
.group .tb { margin-bottom: 1px; }

.panel { display: flex; align-items: center; width: 450px; height: 37px; border: 2px solid #c9c9c9; background: #f1f1f1; color: #6b6b6b; }
.panel h2 { flex: 1; font-size: 15px; line-height: 20px; }
.panel .grip { width: 5px; height: 17px; margin: 0 1px 0 10px; border-width: 0 1px; border-color: #777; }
.browser { margin-top: 6px; padding: 0 0 1px 6px; }
.fold { width: 30px; }
.tree { margin-top: 9px; padding-left: 25px; }
.tree li { display: flex; align-items: center; height: 30px; margin-bottom: 6px; padding-left: 28px; }
.tree .root { padding-left: 0; }
.open { margin-right: 11px; }
.exp { width: 16px; height: 22px; margin-right: 12px; }
.node { display: flex; align-items: center; height: 30px; padding: 0 16px 0 4px; background: #f1f1f1; }
.bulb { width: 18px; height: 24px; margin: 0 17px 0 3px; }
.root .node { padding-right: 12px; }
.root .bulb { margin-left: 3px; margin-right: 12px; }
.ic { width: 23px; height: 21px; margin-right: 22px; }
.gear { height: 24px; color: #555; }
.picked { display: flex; align-items: center; gap: 22px; width: 118px; height: 24px; padding-left: 5px; background: #999; color: #fff; font-weight: bold; }
.root input { appearance: none; width: 19px; height: 19px; margin: 0 0 0 6px; border: 2px solid #444; border-radius: 50%; background: radial-gradient(circle, #333 3px, #fafafa 4px); }

.bottom { display: flex; align-items: flex-end; margin-top: auto; gap: 299px; }
.comments { border-top: 0; padding-left: 36px; }
.navbar { display: flex; align-items: center; height: 36px; width: 380px; margin-bottom: 1px; padding-left: 4px; background: #f1f1f1; }
.navbar button { gap: 7px; margin-right: 9px; color: #444; }
.navbar .look, .navbar .pan { margin-right: 15px; }
.navbar .zm { margin-right: 13px; }
.navbar .fit { margin-right: 19px; }
.navbar .disp, .navbar .grd, .navbar .vp { gap: 3px; }

.timeline { display: flex; height: 64px; padding-right: 8px; border-top: 3px solid #cacaca; background: #f1f1f1; }
.play { display: flex; align-items: center; gap: 18px; height: 72px; padding-left: 15px; fill: #4a4a4a; }
.steps { position: relative; display: flex; margin-left: 26px; padding-top: 22px; }
.steps::after { content: ""; position: absolute; left: 17px; right: 17px; bottom: 0; height: 3px; background: #c9c9c9; }
.steps li { width: 36px; }
.steps li svg { width: 24px; height: 24px; margin: 0 6px; }
.steps li::after { content: ""; display: block; width: 2px; height: 12px; margin: 4px 17px 0; background: #c9c9c9; }
.marker { margin: 13px auto 0 -9px; height: 48px; }
.settings { height: 72px; color: #606060; }
```
